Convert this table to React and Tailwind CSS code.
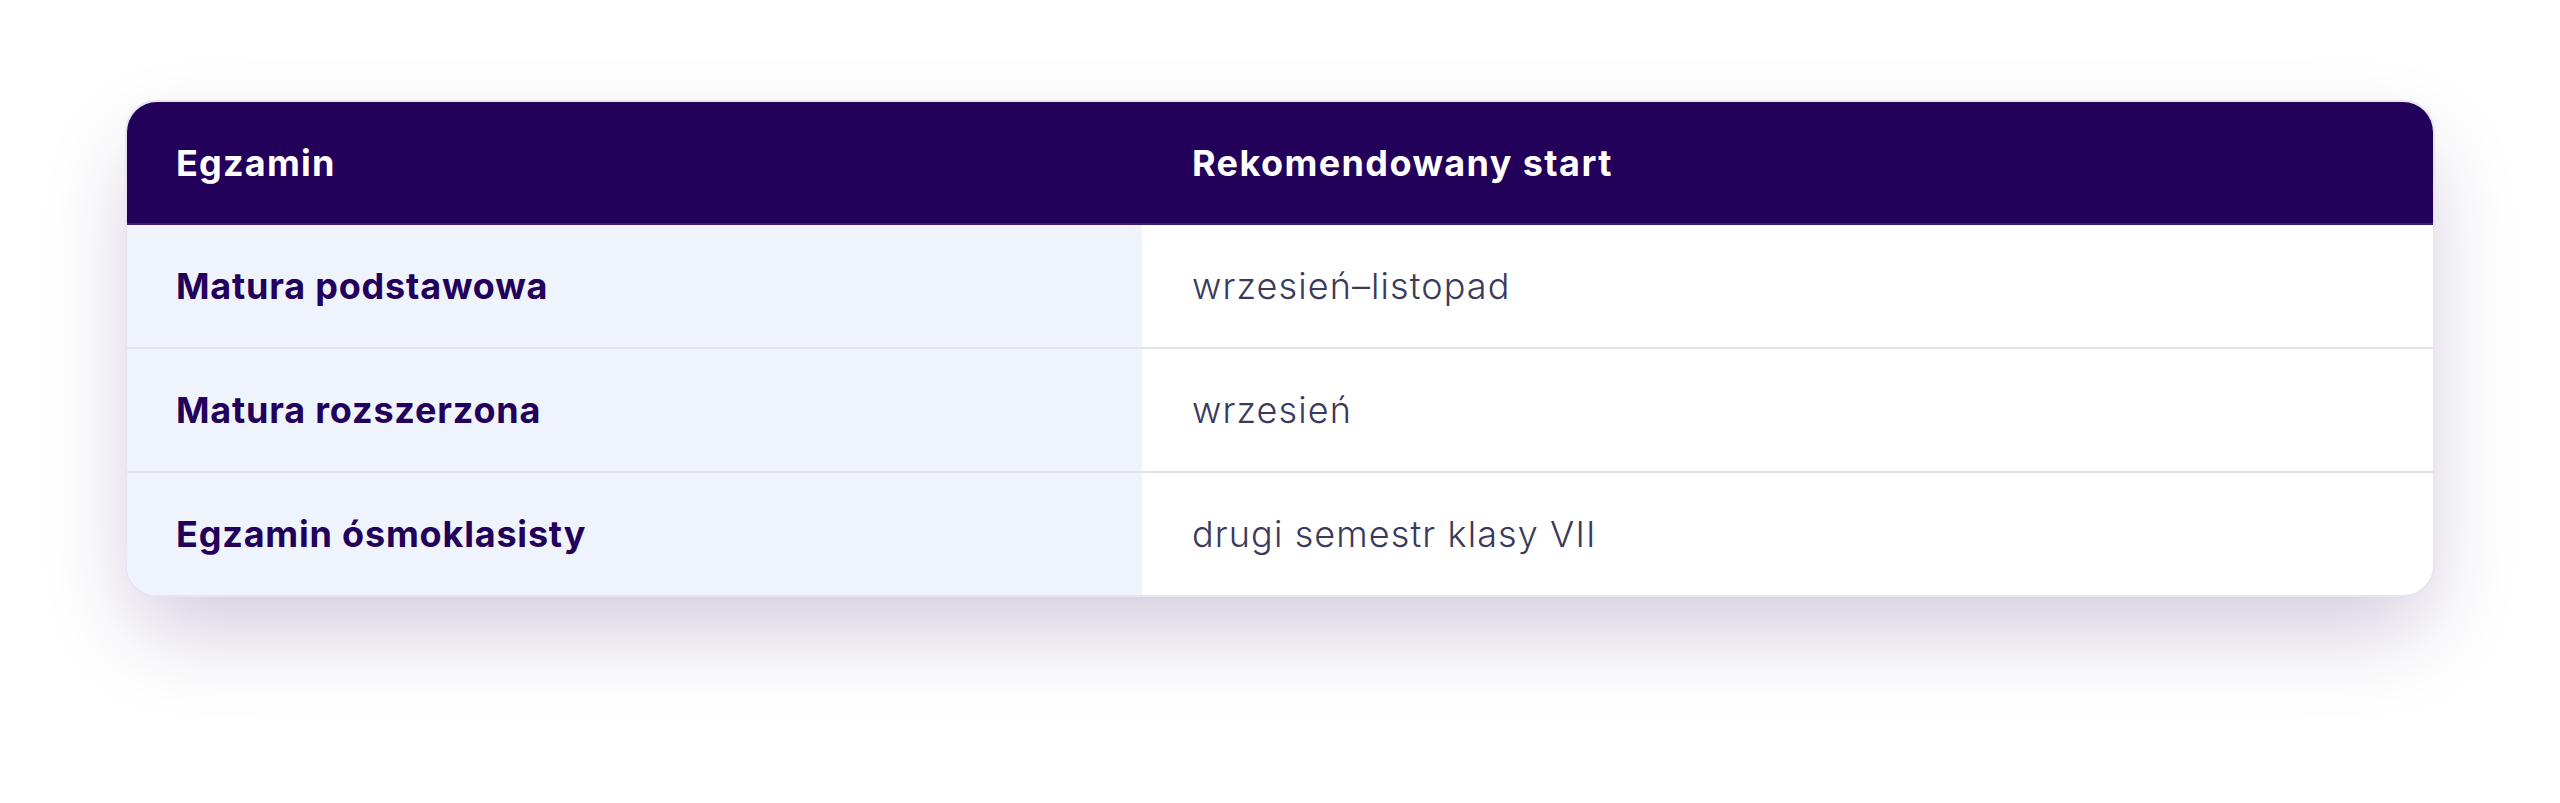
import React from 'react';

const rows = [
  { exam: 'Matura podstawowa', start: 'wrzesień–listopad' },
  { exam: 'Matura rozszerzona', start: 'wrzesień' },
  { exam: 'Egzamin ósmoklasisty', start: 'drugi semestr klasy VII' },
];

export default function App() {
  return (
    <div className="min-h-[803px] bg-white px-[125px] pt-[100px] font-['Inter','Noto_Sans',sans-serif]">
      <div className="overflow-hidden rounded-[32px] border-2 border-[#e8e5f1] bg-white shadow-[0_40px_90px_-10px_rgba(36,0,90,0.22)]">
        {/* Header */}
        <div className="grid grid-cols-[1015px_1fr] bg-[#23005a] border-b-2 border-[#3b1f6e]">
          <div className="flex h-[121px] items-center pl-[49px] text-[36px] font-bold tracking-[1.2px] text-white">
            Egzamin
          </div>
          <div className="flex h-[121px] items-center pl-[50px] text-[36px] font-bold tracking-[1.4px] text-white">
            Rekomendowany start
          </div>
        </div>

        {/* Rows */}
        {rows.map((row, i) => (
          <div
            key={row.exam}
            className={
              'grid grid-cols-[1015px_1fr]' +
              (i < rows.length - 1 ? ' border-b-2 border-[#e2e3ef]' : '')
            }
          >
            <div className="flex h-[122px] items-center bg-[#eff3fc] pl-[49px] text-[36px] font-bold tracking-[0.8px] text-[#23005a]">
              {row.exam}
            </div>
            <div className="flex h-[122px] items-center pl-[50px] text-[36px] font-light tracking-[1.1px] text-[#3b3a5c]">
              {row.start}
            </div>
          </div>
        ))}
      </div>
    </div>
  );
}
